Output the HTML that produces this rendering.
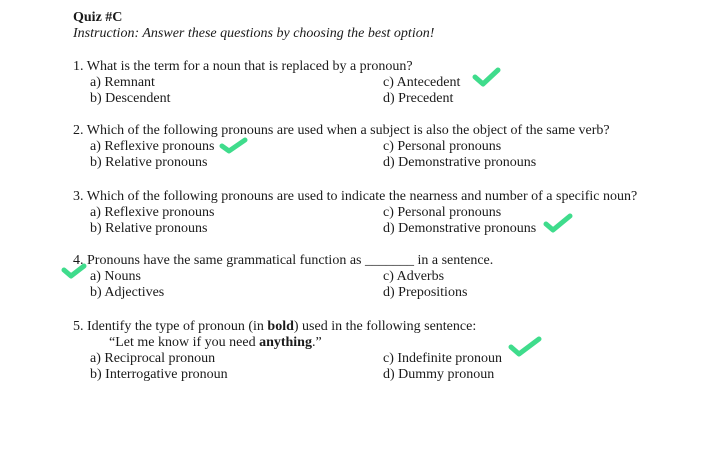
<!DOCTYPE html>
<html><head><style>
body{margin:0;width:720px;height:465px;background:#fff;position:relative;overflow:hidden;font-family:"Liberation Serif",serif;font-size:14px;color:#1a1a1a}
.t{position:absolute;white-space:nowrap;line-height:16px}
svg{position:absolute}
</style></head><body>
<div class="t" style="left:73px;top:10px;font-weight:bold">Quiz #C</div>
<div class="t" style="left:73px;top:26px;font-style:italic">Instruction: Answer these questions by choosing the best option!</div>

<div class="t" style="left:73px;top:59px">1. What is the term for a noun that is replaced by a pronoun?</div>
<div class="t" style="left:90px;top:75px">a) Remnant</div>
<div class="t" style="left:90px;top:91px">b) Descendent</div>
<div class="t" style="left:383px;top:75px">c) Antecedent</div>
<div class="t" style="left:383px;top:91px">d) Precedent</div>

<div class="t" style="left:73px;top:123px">2. Which of the following pronouns are used when a subject is also the object of the same verb?</div>
<div class="t" style="left:90px;top:139px">a) Reflexive pronouns</div>
<div class="t" style="left:90px;top:155px">b) Relative pronouns</div>
<div class="t" style="left:383px;top:139px">c) Personal pronouns</div>
<div class="t" style="left:383px;top:155px">d) Demonstrative pronouns</div>

<div class="t" style="left:73px;top:189px">3. Which of the following pronouns are used to indicate the nearness and number of a specific noun?</div>
<div class="t" style="left:90px;top:205px">a) Reflexive pronouns</div>
<div class="t" style="left:90px;top:221px">b) Relative pronouns</div>
<div class="t" style="left:383px;top:205px">c) Personal pronouns</div>
<div class="t" style="left:383px;top:221px">d) Demonstrative pronouns</div>

<div class="t" style="left:73px;top:253px">4. Pronouns have the same grammatical function as _______ in a sentence.</div>
<div class="t" style="left:90px;top:269px">a) Nouns</div>
<div class="t" style="left:90px;top:285px">b) Adjectives</div>
<div class="t" style="left:383px;top:269px">c) Adverbs</div>
<div class="t" style="left:383px;top:285px">d) Prepositions</div>

<div class="t" style="left:73px;top:319px">5. Identify the type of pronoun (in <b>bold</b>) used in the following sentence:</div>
<div class="t" style="left:109px;top:335px">“Let me know if you need <b>anything</b>.”</div>
<div class="t" style="left:90px;top:351px">a) Reciprocal pronoun</div>
<div class="t" style="left:90px;top:367px">b) Interrogative pronoun</div>
<div class="t" style="left:383px;top:351px">c) Indefinite pronoun</div>
<div class="t" style="left:383px;top:367px">d) Dummy pronoun</div>

<svg width="720" height="465" style="left:0;top:0">
<g fill="none" stroke="#3fdc8c" stroke-width="5" stroke-linecap="round" stroke-linejoin="round">
<path d="M475 77 L483 84 L498 70"/>
<path d="M222 146 L229 151 L245 140"/>
<path d="M546 224 L553 230 L570 216"/>
<path d="M64 270 L71 276 L84 266"/>
<path d="M511 347 L519 354 L539 339"/>
</g>
</svg>
</body></html>
